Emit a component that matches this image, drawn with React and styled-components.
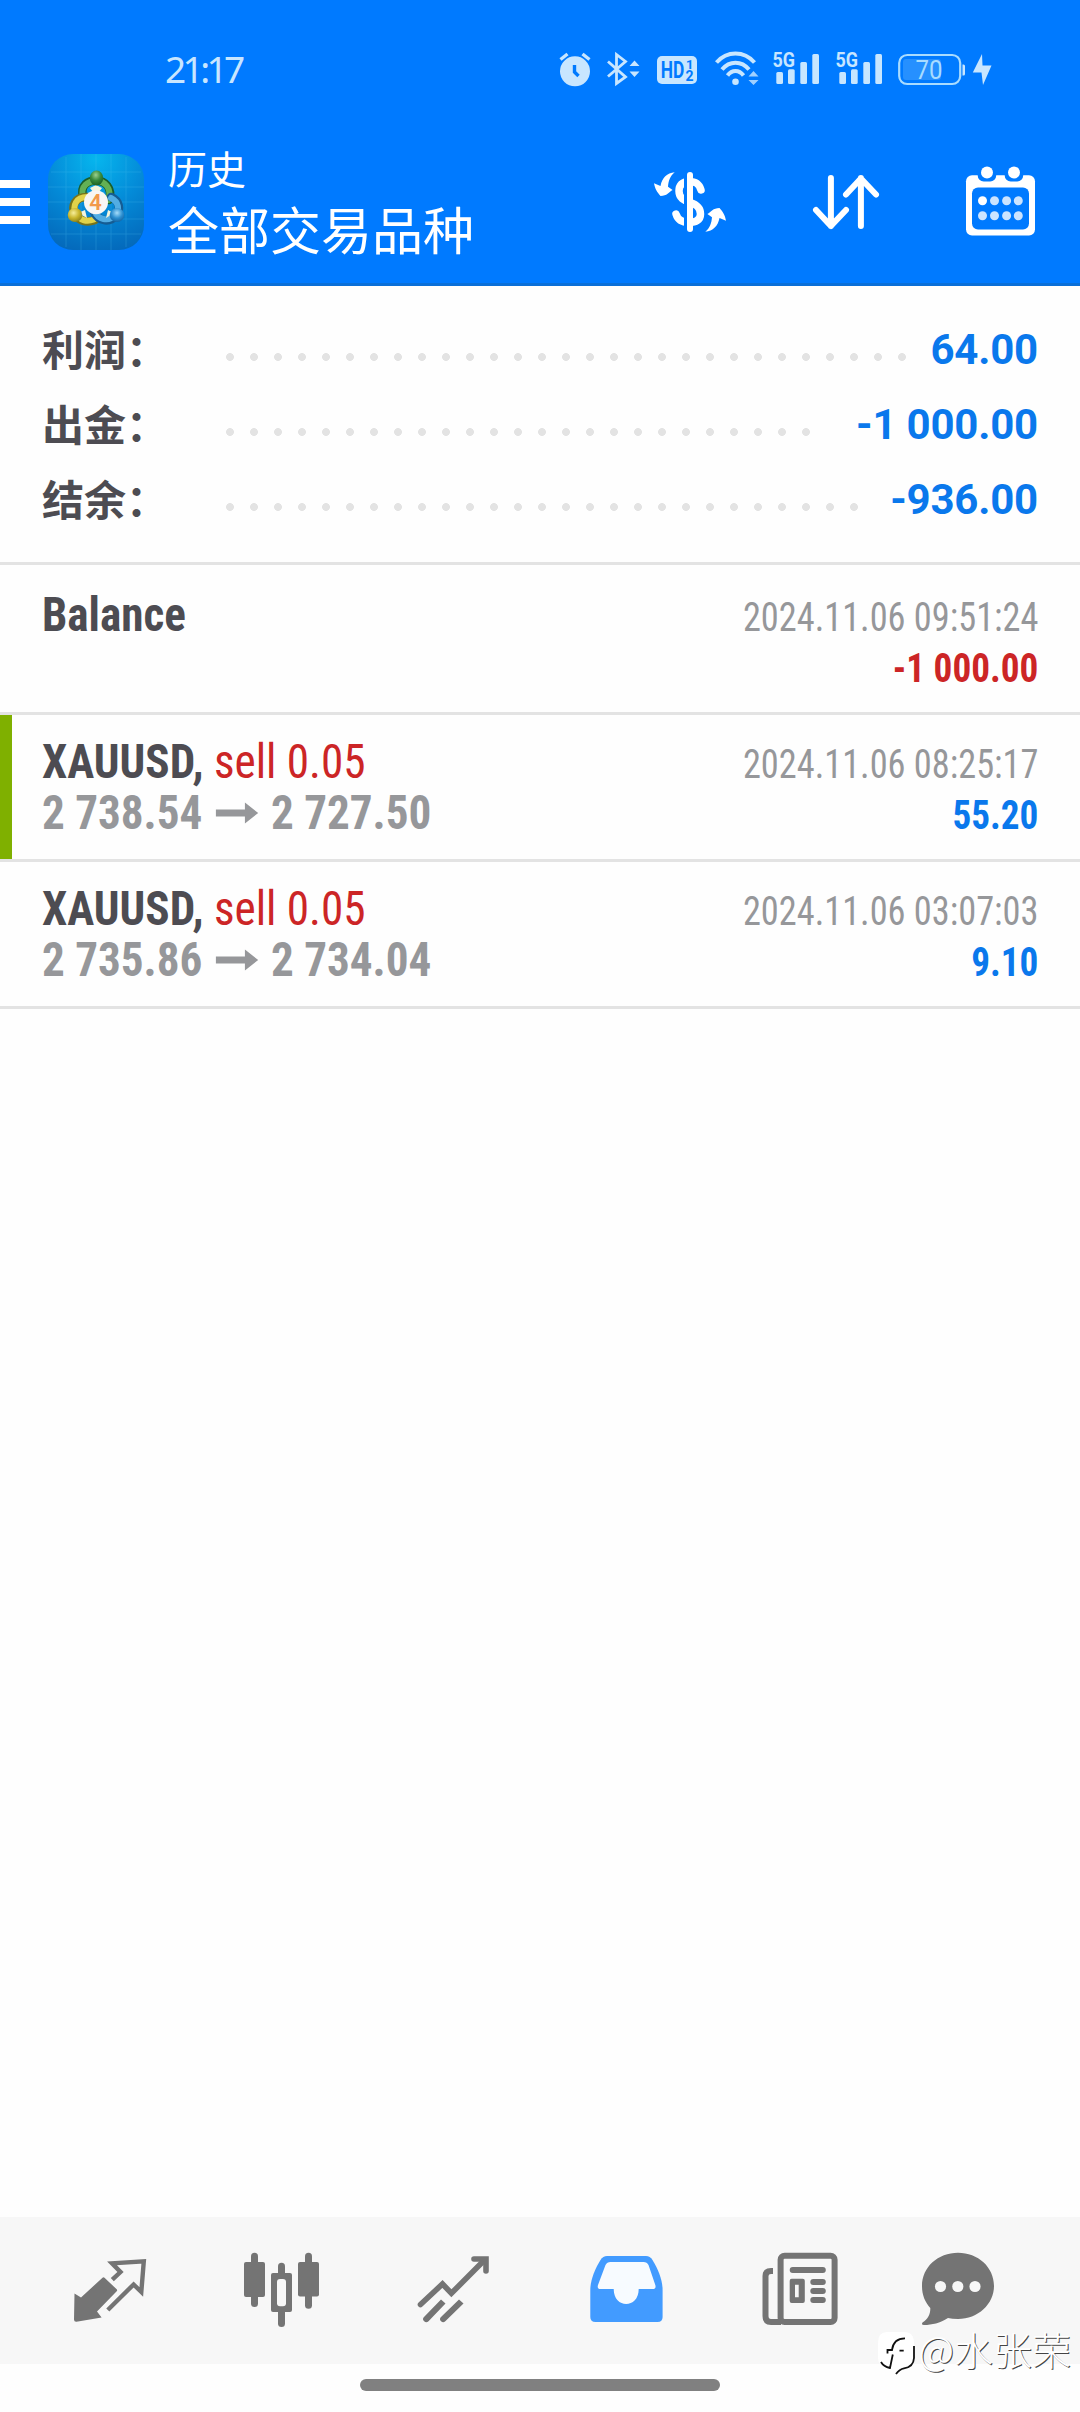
import React from "react";
import styled, { createGlobalStyle } from "styled-components";

const summary = [
  { label: "利润：", value: "64.00", dots: 29 },
  { label: "出金：", value: "-1 000.00", dots: 25 },
  { label: "结余：", value: "-936.00", dots: 27 },
];

const deals = [
  { id: 1, title: "Balance", time: "2024.11.06 09:51:24", profit: "-1 000.00" },
  {
    id: 2,
    title: "XAUUSD,",
    side: "sell 0.05",
    open: "2 738.54",
    close: "2 727.50",
    time: "2024.11.06 08:25:17",
    profit: "55.20",
    marked: true,
  },
  {
    id: 3,
    title: "XAUUSD,",
    side: "sell 0.05",
    open: "2 735.86",
    close: "2 734.04",
    time: "2024.11.06 03:07:03",
    profit: "9.10",
  },
];

const Signal = () => (
  <svg width="63" height="44" viewBox="0 -2 63 44">
    <text x="0.5" y="17" fontSize="20" fontWeight="700" textLength="22.5" lengthAdjust="spacingAndGlyphs">
      5G
    </text>
    <rect x="4.3" y="22" width="6.7" height="12" rx="1.5" />
    <rect x="16" y="19.3" width="6.7" height="14.7" rx="1.5" />
    <rect x="28.3" y="12" width="6.7" height="22" rx="1.5" />
    <rect x="40.3" y="4" width="6.7" height="30" rx="1.5" />
  </svg>
);

const StatusIcons = () => (
  <Icons>
    <svg width="48" height="40" viewBox="0 0 48 40">
      <circle cx="16" cy="21.3" r="15" />
      <path d="M1.5 9.5L8.5 4M30.5 9.5L23.5 4" stroke="#c8e6ff" strokeWidth="3.4" />
      <path d="M15.5 15V22L19.5 26" stroke="#007aff" strokeWidth="3.4" fill="none" />
    </svg>
    <svg width="50" height="40" viewBox="0 0 50 40">
      <path
        d="M1 11.5L18.5 27L9.5 33.5V4.5L18.5 11.5L1 26.5"
        stroke="#c8e6ff"
        strokeWidth="2.8"
        fill="none"
      />
      <path d="M22.5 16L27.5 10.5L32.5 16zM22.5 21.5L27.5 27L32.5 21.5z" />
    </svg>
    <svg width="58" height="40" viewBox="0 0 58 40">
      <rect x="0" y="6" width="40" height="28" rx="5" />
      <g fill="#007aff" fontWeight="700">
        <text x="3.8" y="28" fontSize="23" textLength="23.5" lengthAdjust="spacingAndGlyphs">
          HD
        </text>
        <text x="29" y="19" fontSize="13">1</text>
        <text x="28.5" y="31" fontSize="14">2</text>
      </g>
    </svg>
    <svg width="57" height="40" viewBox="0 0 57 40">
      <g stroke="#c8e6ff" strokeWidth="4" fill="none">
        <path d="M1.5 12.5C12 .5 29 .5 39.5 12.5" />
        <path d="M7 19.5C14.5 10.5 26.5 10.5 34 19.5" />
        <path d="M12.5 25.5C17 19.5 24 19.5 28.5 25.5" />
      </g>
      <circle cx="20.5" cy="31.7" r="3.3" />
      <path d="M33.5 26.5L38.5 21L43.5 26.5zM33.5 30L38.5 35L43.5 30z" opacity=".8" />
    </svg>
    <Signal />
    <Signal />
    <svg width="74" height="40" viewBox="0 0 74 40">
      <rect x="5" y="9" width="38" height="21" rx="3" fill="#2690ff" />
      <rect x="1.2" y="5" width="61" height="29" rx="8" fill="none" stroke="#a9dcff" strokeWidth="2.2" />
      <path d="M64.5 14.5h1a1.5 1.5 0 0 1 1.5 1.5v8a1.5 1.5 0 0 1-1.5 1.500h-1z" />
      <text x="17.5" y="28.5" fontSize="25" textLength="27" lengthAdjust="spacingAndGlyphs" fill="#a9dcff">
        70
      </text>
    </svg>
    <svg width="20" height="40" viewBox="0 0 20 40">
      <path d="M10 4L.8 22.5H9.5L11 35L19.5 15.5H10.500z" />
    </svg>
  </Icons>
);

const AppLogo = () => (
  <svg width="96" height="96" viewBox="0 0 96 96">
    <defs>
      <radialGradient id="sky" cx=".5" cy=".05" r="1">
        <stop offset="0" stopColor="#06b6ee" />
        <stop offset=".5" stopColor="#048bd8" />
        <stop offset="1" stopColor="#0468ba" />
      </radialGradient>
      <radialGradient id="green" cx=".45" cy=".3" r=".75">
        <stop offset="0" stopColor="#9bd08e" />
        <stop offset=".5" stopColor="#37893b" />
        <stop offset="1" stopColor="#16581f" />
      </radialGradient>
      <radialGradient id="yellow" cx=".4" cy=".35" r=".75">
        <stop offset="0" stopColor="#f6ee9a" />
        <stop offset=".5" stopColor="#c9b62c" />
        <stop offset="1" stopColor="#7d7514" />
      </radialGradient>
      <radialGradient id="blue" cx=".5" cy=".35" r=".75">
        <stop offset="0" stopColor="#a5dcfa" />
        <stop offset=".5" stopColor="#2c8fd0" />
        <stop offset="1" stopColor="#0b5594" />
      </radialGradient>
    </defs>
    <rect width="96" height="96" rx="25" fill="url(#sky)" />
    <path
      d="M18 3V93M33 0V96M48 0V96M63 0V96M78 3V93M3 18H93M0 33H96M0 48H96M0 65H96M3 80H93"
      stroke="#5cc8f5"
      strokeWidth=".8"
      opacity=".28"
    />
    <g fill="none" strokeLinecap="round">
      <path d="M35 43C32 31 40 26.500 48 26.500C57 26.500 65 34 61 46" stroke="#1b5e2a" strokeWidth="8.500" />
      <path d="M35 43C32 32 40 27 48 27C57 27 64 34 60.500 46" stroke="#63b055" strokeWidth="6" />
      <path d="M39 43C27 43 23 52 27 59.500C31 67.500 39 69 47 66" stroke="#77731a" strokeWidth="8.500" />
      <path d="M39 43C28 43 24 52 28 59.500C32 67 39 68 46 65.500" stroke="#e0d34a" strokeWidth="6" />
      <path d="M63 43C72 47 73 56 68 62C60 70 50 66 46 58" stroke="#155c93" strokeWidth="8.500" />
      <path d="M63 44C71 48 72 56 67 61.500C60 68.500 50 65 47 58" stroke="#52ade3" strokeWidth="6" />
    </g>
    <path d="M42 34L48 31L54 34L51 38H45zM30 59L37 56L39 64zM66 59L60 56L58 64z" fill="#f2f4dd" />
    <ellipse cx="48.5" cy="24" rx="6.7" ry="7.5" fill="url(#green)" />
    <ellipse cx="27" cy="61" rx="7.3" ry="7" fill="url(#yellow)" />
    <ellipse cx="69" cy="61" rx="7.3" ry="7" fill="url(#blue)" />
    <circle cx="48" cy="48.3" r="12" fill="#f7f6f4" />
    <LogoDigit x="47.5" y="56.3" textAnchor="middle">
      4
    </LogoDigit>
  </svg>
);

const Header = () => (
  <Top>
    <StatusBar>
      <Clock>21:17</Clock>
      <StatusIcons />
    </StatusBar>
    <Toolbar>
      <svg width="30" height="44" viewBox="0 0 30 44" fill="#fff">
        <path d="M0 0H30V8H0zM0 18H30V26H0zM0 36H30V44H0z" />
      </svg>
      <AppLogo />
      <Titles>
        <Caption>历史</Caption>
        <Title>全部交易品种</Title>
      </Titles>
      <Actions>
        <svg width="72" height="60" viewBox="0 0 72 60" fill="#fff">
          <path
            d="M47 18C45 11 41 9.500 35 9.500C28 9.500 25 13.500 25 19C25 26 30 28.500 36 30.500C43 32.500 46.500 36 46.500 42C46.500 48 42 50.500 35 50.500C27 50.500 23.500 47 22 42"
            fill="none"
            stroke="#fff"
            strokeWidth="7.5"
            strokeLinecap="round"
          />
          <rect x="30" y="2" width="3" height="56" fill="#007aff" />
          <rect x="33" y="0" width="6" height="60" rx="3" />
          <path id="turn" d="M20.7 .3C16 4 14.500 9 14 14.700L18.600 18C15 20 13 24 6.500 24C3 20 1 17 0 11.300L6.500 14C8 6 13 1 20.700 .3z" />
          <use href="#turn" transform="rotate(180 36 30)" />
        </svg>
        <svg width="66" height="56" viewBox="0 0 66 56">
          <path
            d="M17.9 4V52M3 36L17.9 52L33 36M47.9 52V4M33 20.5L47.9 4.5L63 20.5"
            fill="none"
            stroke="#fff"
            strokeWidth="6"
            strokeLinecap="round"
            strokeLinejoin="round"
          />
        </svg>
        <svg width="69" height="74" viewBox="0 1.5 69 74" fill="#fff">
          <rect x="0" y="11.7" width="69" height="60.3" rx="6" />
          <rect x="6" y="24" width="57" height="42" rx="6" fill="#007aff" />
          <path d="M11.7 11V12a6 6 0 0 0 6 6h6.500a6 6 0 0 0 6-6V11zM38.700 11V12a6 6 0 0 0 6 6h6.500a6 6 0 0 0 6-6V11z" fill="#007aff" />
          <circle cx="21" cy="9" r="6" />
          <circle cx="48" cy="9" r="6" />
          {[37.3, 52.3].map((y) =>
            [16.5, 28.5, 40.6, 52.3].map((x) => (
              <circle key={`${x}-${y}`} cx={x} cy={y} r="4.5" opacity={x + y < 54 ? 1 : 0.8} />
            ))
          )}
        </svg>
      </Actions>
    </Toolbar>
  </Top>
);

const Deal = ({ deal }) => (
  <Row $first={!deal.side} $marked={deal.marked}>
    <Left>
      <Symbol>
        {deal.title} {deal.side && <Side>{deal.side}</Side>}
      </Symbol>
      {deal.open && (
        <Prices>
          {deal.open}
          <svg width="45" height="22" viewBox="0 0 43 22" preserveAspectRatio="none">
            <path d="M0 7.500H29.500V.5L43 11L29.500 21.500V14.500H0z" fill="#96979a" />
          </svg>
          {deal.close}
        </Prices>
      )}
    </Left>
    <Right>
      <Time>{deal.time}</Time>
      <Profit $loss={deal.profit.startsWith("-")}>{deal.profit}</Profit>
    </Right>
  </Row>
);

const TabBar = () => (
  <Tabs>
    <TabIcon viewBox="0 0 172 147">
      <path d="M50.5 76.500L57 80.500L78.500 60.700Q79.500 60 80.500 60.700L92.700 72.300Q93.600 73.300 92.700 74.300L73 94.500L77.600 100.500L52.500 104.800Q50 105 50 102.500z" />
      <path
        d="M88.3 62.7L96.5 55L88 46.3L119.8 44.3L117.3 75L109.6 67.5L83.8 93"
        fill="none"
        stroke="currentColor"
        strokeWidth="4.4"
      />
    </TabIcon>
    <TabIcon viewBox="0 0 172 147">
      <rect x="55" y="35.7" width="7" height="54.3" rx="3.5" />
      <rect x="48" y="45" width="21" height="35" rx="2" />
      <rect x="109" y="35.7" width="7" height="56" rx="3.5" />
      <rect x="102" y="45" width="21" height="34.5" rx="2" />
      <rect x="82" y="45.7" width="7" height="64.3" rx="3.5" />
      <rect x="75" y="56" width="21" height="39" rx="2" />
      <rect x="81" y="62" width="9" height="27.3" rx="3" fill="#f7f7f7" />
    </TabIcon>
    <TabIcon viewBox="0 0 172 147">
      <g fill="none" stroke="currentColor" strokeWidth="5.6" strokeLinecap="round">
        <path d="M52.5 87.5L74.5 67L83.4 76.3L116 43.5" />
        <path d="M106 42H118V54" />
      </g>
      <path d="M56 100L73 82.500L77.500 86.500L60.500 104.200A2.900 2.900 0 0 1 56 100zM73 100L91 82.500L95.500 86.500L77.300 104.200A2.900 2.900 0 0 1 73 100z" />
    </TabIcon>
    <TabIcon viewBox="0 0 172 147" $active>
      <path d="M67 39H106Q110 39 112.500 43C118 52 122.600 63 122.600 73V100Q122.600 105 117.500 105H55.500Q50.300 105 50.300 100V73C50.300 63 55 52 60.500 43Q63 39 67 39z" />
      <path
        d="M70.5 45Q67 45 65.500 48L58 68Q56.800 72 60.500 72H73.700C73.700 92 98.700 92 98.700 72H112.500Q116.500 72 115.300 68L108.500 48Q107 45 103.500 45z"
        fill="#f7fbff"
      />
    </TabIcon>
    <TabIcon viewBox="0 0 172 147">
      <g fill="none" stroke="currentColor" strokeWidth="6">
        <rect x="68.6" y="38.7" width="54" height="66.3" rx="4" />
        <path d="M61 54H59Q53.5 54 53.5 59V99Q53.5 105 59 105H69" />
        <path d="M80.7 53H110.8M101.3 65H110.8M101.3 74H110.8M101.3 83H110.8" strokeLinecap="round" />
      </g>
      <path
        fillRule="evenodd"
        d="M79.7 61.700H90.800Q92.800 61.700 92.800 63.700V84Q92.800 86 90.800 86H79.700Q77.700 86 77.700 84V63.700Q77.700 61.700 79.700 61.700zM83 67.700V80.300H86.700V67.700z"
      />
    </TabIcon>
    <TabIcon viewBox="0 0 172 147">
      <path d="M74 35.700C94 35.700 110 50 110 69C110 87 94 102 74 102Q68 102 64 101C56 106 48 108 40 108Q37 108 38.500 105.500C44 102 46.500 97 46.300 91C41 85 38 78 38 69C38 50 54 35.700 74 35.700z" />
      <g fill="#f7f7f7">
        <circle cx="56.5" cy="69.5" r="5.6" />
        <circle cx="73.8" cy="69.5" r="5.6" />
        <circle cx="91" cy="69.5" r="5.6" />
      </g>
    </TabIcon>
  </Tabs>
);

const Watermark = () => (
  <Mark>
    <svg width="38" height="46" viewBox="0 0 38 46">
      <path d="M10 1H27Q37 1 37 12V27Q37 36 29 38L23 39L19 43L17 38L12 38Q1 36 1 27V12Q1 1 10 1z" fill="#fff" />
      <g fill="none" stroke="#111" strokeWidth="1.8">
        <path d="M28 7.3C20 7.3 16 11 15 19H10.5V22.5M22.5 19.7H26.7M15.8 23.500L13 37Q6.500 35.500 4 31M37 15V27Q36.500 36 27 37.300Q22.500 38 19 43" />
      </g>
    </svg>
    <Author>@水张荣</Author>
  </Mark>
);

const App = () => {
  return (
    <Screen>
      <GlobalStyle />
      <Header />
      <Summary>
        {summary.map((item) => (
          <SummaryRow key={item.label}>
            <Label>{item.label}</Label>
            <Dots $count={item.dots} />
            <Value>{item.value}</Value>
          </SummaryRow>
        ))}
      </Summary>
      <List>
        {deals.map((deal) => (
          <Deal key={deal.id} deal={deal} />
        ))}
      </List>
      <TabBar />
      <Gesture>
        <Handle />
      </Gesture>
      <Watermark />
    </Screen>
  );
};

export default App;

const GlobalStyle = createGlobalStyle`
  * {
    box-sizing: border-box;
  }
  body {
    margin: 0;
    background-color: #fefefe;
    font-family: Roboto, "Noto Sans CJK SC", sans-serif;
  }
  svg {
    display: block;
    flex-shrink: 0;
    overflow: visible;
  }
`;

const Screen = styled.div`
  position: relative;
  display: flex;
  flex-direction: column;
  width: 1080px;
  height: 2412px;
  overflow: hidden;
`;

const Top = styled.header`
  height: 286px;
  background-color: #007aff;
  border-bottom: 3px solid #0a6fd8;
`;
const StatusBar = styled.div`
  display: flex;
  align-items: center;
  justify-content: space-between;
  height: 140px;
  padding: 0 88px 0 165px;
`;
const Clock = styled.span`
  padding-bottom: 3px;
  color: #c8e6ff;
  font-family: "Noto Sans", sans-serif;
  font-size: 37px;
  letter-spacing: -3.6px;
`;
const Icons = styled.div`
  display: flex;
  align-items: center;
  fill: #c8e6ff;
`;
const Toolbar = styled.div`
  display: flex;
  align-items: center;
  height: 124px;
  padding-right: 45px;

  > svg:first-child {
    margin-right: 18px;
  }
`;
const LogoDigit = styled.text`
  fill: #f2994a;
  font-size: 22px;
  font-weight: 600;
`;
const Titles = styled.div`
  flex: 1;
  margin-left: 24px;
  padding-bottom: 5px;
  color: white;
  font-family: "Noto Sans CJK SC", sans-serif;
  font-weight: 400;
`;
const Caption = styled.div`
  font-size: 39px;
  line-height: 57px;
`;
const Title = styled.div`
  font-size: 51px;
  line-height: 65px;
`;
const Actions = styled.div`
  display: flex;
  align-items: center;
  gap: 87px;
`;

const Summary = styled.section`
  height: 279px;
  padding: 26px 42px 0;
  border-bottom: 3px solid #e3e3e3;
`;
const SummaryRow = styled.div`
  display: flex;
  align-items: center;
  height: 75px;
`;
const Label = styled.span`
  width: 176px;
  padding-bottom: 4px;
  color: #4d4c52;
  font-family: "Noto Sans CJK SC", sans-serif;
  font-size: 42px;
  font-weight: 700;
`;
const Dots = styled.span`
  width: ${({ $count }) => $count * 24}px;
  height: 24px;
  margin-top: 14px;
  background: radial-gradient(circle, #e3e3e3 3.6px, transparent 4.2px) 0 0 / 24px 24px;
`;
const Value = styled.span`
  margin-left: auto;
  color: #0a78ec;
  font-size: 42px;
  font-weight: 700;
  letter-spacing: -0.2px;
`;

const List = styled.main`
  flex: 1;
`;
const Row = styled.div`
  display: flex;
  justify-content: space-between;
  height: ${({ $first }) => ($first ? 150 : 147)}px;
  padding: ${({ $first }) => ($first ? 24 : 21)}px 42px 0 42px;
  border-bottom: 3px solid #e3e3e3;
  box-shadow: ${({ $marked }) => ($marked ? "inset 12px 0 #7fb000" : "none")};
  font-family: "Roboto Condensed", Roboto, sans-serif;
  font-stretch: 75%;
`;
/* both columns are squeezed a little towards their own edge */
const Left = styled.div`
  transform: scaleX(0.94);
  transform-origin: left;
`;
const Symbol = styled.div`
  color: #4d4c52;
  font-size: 48px;
  font-weight: 700;
  line-height: 51px;
`;
const Side = styled.span`
  color: #cc2526;
  font-weight: 400;
`;
const Prices = styled.div`
  display: flex;
  align-items: center;
  gap: 14px;
  color: #96979a;
  font-size: 48px;
  font-weight: 700;
  line-height: 51px;
`;
const Right = styled.div`
  padding-top: 3px;
  text-align: right;
  font-size: 40px;
  line-height: 51px;
`;
const Time = styled.div`
  color: #96979a;
  transform: scaleX(0.908);
  transform-origin: right;
`;
const Profit = styled.div`
  color: ${({ $loss }) => ($loss ? "#cc2526" : "#0a78ec")};
  font-weight: 700;
  transform: scaleX(0.93);
  transform-origin: right;
`;

const Tabs = styled.nav`
  display: grid;
  grid-template-columns: repeat(6, 172px);
  height: 147px;
  padding-left: 24px;
  background-color: #f7f7f7;
`;
const TabIcon = styled.svg`
  width: 172px;
  height: 147px;
  color: ${({ $active }) => ($active ? "#429bff" : "#747474")};
  fill: currentColor;
`;
const Gesture = styled.div`
  display: flex;
  justify-content: center;
  height: 48px;
  padding-top: 15px;
`;
const Handle = styled.div`
  width: 360px;
  height: 12px;
  border-radius: 6px;
  background-color: #808080;
`;
const Mark = styled.div`
  position: absolute;
  right: 9px;
  bottom: 35px;
  display: flex;
  gap: 4px;
`;
const Author = styled.span`
  color: white;
  font-family: "Noto Sans CJK SC", sans-serif;
  font-size: 39px;
  font-weight: 300;
  line-height: 34px;
  text-shadow: 1px 1px 0 #444;
`;
